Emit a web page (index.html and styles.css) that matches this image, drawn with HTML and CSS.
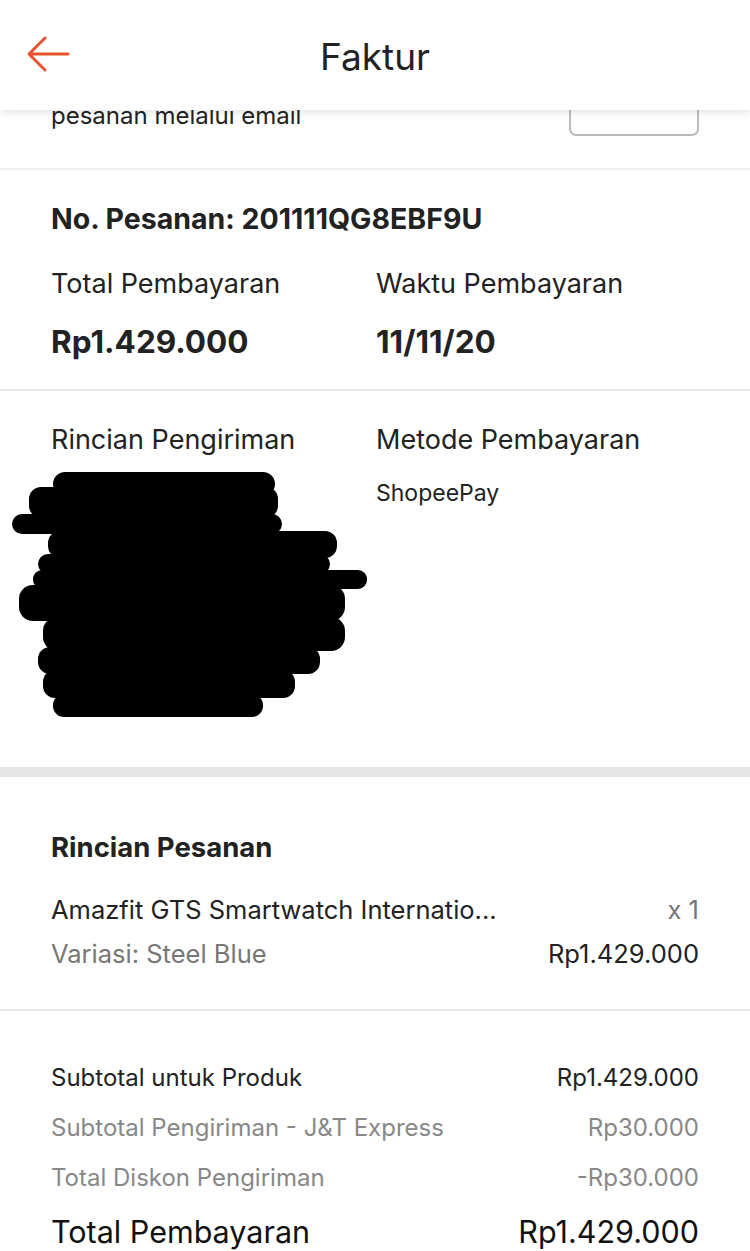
FILE: index.html
```html
<!DOCTYPE html>
<html lang="id">
<head>
    <meta charset="UTF-8">
    <meta name="viewport" content="width=device-width, initial-scale=1.0">
    <title>Faktur</title>
    <link rel="stylesheet" href="styles.css">
</head>
<body>
    <div class="page">
        <header class="topbar">
            <button class="back" aria-label="Kembali">
                <svg width="44" height="38" viewBox="0 0 44 38">
                    <path d="M42 19H4M19 3L3 19l16 16" fill="none" stroke="#e8532f" stroke-width="3" stroke-linecap="round" stroke-linejoin="round"/>
                </svg>
            </button>
            <h1>Faktur</h1>
        </header>

        <section class="email">
            <p class="email-text">Kirim faktur untuk<br>pesanan melalui email</p>
            <button class="email-btn">Kirim</button>
        </section>

        <section class="order">
            <h2 class="order-no">No. Pesanan: 201111QG8EBF9U</h2>
            <div class="two-col">
                <div>
                    <p class="label">Total Pembayaran</p>
                    <p class="value">Rp1.429.000</p>
                </div>
                <div>
                    <p class="label">Waktu Pembayaran</p>
                    <p class="value">11/11/20</p>
                </div>
            </div>
        </section>

        <section class="info">
            <div class="two-col">
                <div>
                    <p class="label">Rincian Pengiriman</p>
                    <svg class="redact" width="360" height="250" viewBox="0 0 360 250">
                        <rect x="43" y="1" width="222" height="24" rx="12"/>
                        <rect x="19" y="16" width="249" height="31" rx="12"/>
                        <rect x="2" y="43" width="270" height="20" rx="10"/>
                        <rect x="38" y="60" width="289" height="27" rx="12"/>
                        <rect x="28" y="83" width="292" height="20" rx="10"/>
                        <rect x="23" y="99" width="334" height="19" rx="9"/>
                        <rect x="9" y="114" width="326" height="36" rx="14"/>
                        <rect x="33" y="146" width="302" height="34" rx="14"/>
                        <rect x="28" y="176" width="282" height="27" rx="12"/>
                        <rect x="33" y="199" width="252" height="28" rx="12"/>
                        <rect x="43" y="223" width="210" height="23" rx="11"/>
                    </svg>
                </div>
                <div>
                    <p class="label">Metode Pembayaran</p>
                    <p class="method">ShopeePay</p>
                </div>
            </div>
        </section>

        <section class="details">
            <h2 class="details-title">Rincian Pesanan</h2>
            <div class="row">
                <span class="name">Amazfit GTS Smartwatch Internatio...</span>
                <span class="muted">x 1</span>
            </div>
            <div class="row">
                <span class="muted">Variasi: Steel Blue</span>
                <span>Rp1.429.000</span>
            </div>
        </section>

        <section class="totals">
            <div class="line">
                <span>Subtotal untuk Produk</span>
                <span>Rp1.429.000</span>
            </div>
            <div class="line soft">
                <span>Subtotal Pengiriman - J&amp;T Express</span>
                <span>Rp30.000</span>
            </div>
            <div class="line soft">
                <span>Total Diskon Pengiriman</span>
                <span>-Rp30.000</span>
            </div>
            <div class="line grand">
                <span>Total Pembayaran</span>
                <span>Rp1.429.000</span>
            </div>
        </section>
    </div>
</body>
</html>
```

FILE: styles.css
```css
* {
    box-sizing: border-box;
}
body {
    margin: 0;
    font-family: Inter, Roboto, "Liberation Sans", sans-serif;
    color: #222;
    background-color: #fff;
}
p, h1, h2 {
    margin: 0;
}
.page {
    position: relative;
    width: 750px;
    height: 1251px;
    overflow: hidden;
}
.topbar {
    position: absolute;
    top: 0;
    left: 0;
    right: 0;
    height: 110px;
    background-color: #fff;
    box-shadow: 0 2px 8px rgba(0, 0, 0, 0.12);
    display: flex;
    align-items: center;
    justify-content: center;
    z-index: 2;
}
.back {
    position: absolute;
    left: 26px;
    top: 35px;
    padding: 0;
    border: none;
    background: none;
    line-height: 0;
}
.topbar h1 {
    font-size: 37px;
    font-weight: 400;
    color: #222;
    margin-top: 2px;
}
.email {
    height: 170px;
    border-bottom: 2px solid #eee;
    padding: 0 51px 32px;
    display: flex;
    align-items: flex-end;
    justify-content: space-between;
}
.email-text {
    font-size: 24px;
    line-height: 30px;
    margin-bottom: 5px;
}
.email-btn {
    width: 130px;
    height: 80px;
    padding-bottom: 20px;
    border: 2px solid #bbb;
    border-radius: 7px;
    background: #fff;
    font: inherit;
    font-size: 20px;
    color: #222;
}
.order {
    padding: 32px 51px 27px;
    border-bottom: 2px solid #e8e8e8;
}
.order-no {
    font-size: 28.5px;
    font-weight: 700;
    line-height: 34px;
    margin-bottom: 31px;
}
.two-col {
    display: grid;
    grid-template-columns: 325px 1fr;
}
.label {
    font-size: 27px;
    line-height: 34px;
}
.value {
    font-size: 31.5px;
    font-weight: 700;
    line-height: 40px;
    margin-top: 21px;
}
.info {
    padding: 32px 51px 46px;
    border-bottom: 10px solid #e6e6e6;
}
.redact {
    display: block;
    margin: 14px 0 0 -41px;
    fill: #000;
}
.method {
    font-size: 23px;
    line-height: 28px;
    margin-top: 22px;
}
.details {
    padding: 54px 51px 33px;
    border-bottom: 2px solid #e8e8e8;
}
.details-title {
    font-size: 27.5px;
    font-weight: 700;
    line-height: 32px;
    margin-bottom: 25px;
}
.row {
    display: flex;
    justify-content: space-between;
    font-size: 25.5px;
    line-height: 44px;
}
.name {
    white-space: nowrap;
}
.muted {
    color: #777;
}
.totals {
    padding: 42px 51px 0;
}
.line {
    display: flex;
    justify-content: space-between;
    font-size: 24px;
    line-height: 50px;
}
.soft {
    color: #888;
}
.grand {
    font-size: 30.5px;
    line-height: 58px;
    color: #111;
}
```
